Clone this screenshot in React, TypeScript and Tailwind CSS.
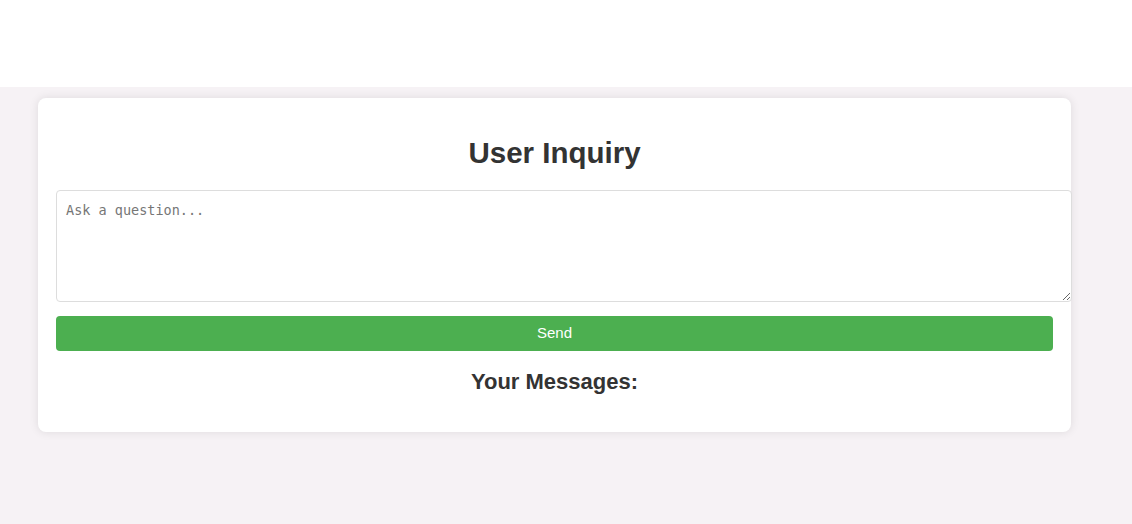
import React, { useState } from 'react';

const App = () => {
    const [question, setQuestion] = useState('');

    return (
        <div className="min-h-screen w-full bg-[#f6f2f5] font-['Liberation_Sans',Arial,sans-serif] text-[#333]">
            <div className="h-[87px] bg-white" />
            <div className="pt-[11px] pl-[38px] pb-[40px]">
                <div className="w-[1033px] rounded-lg bg-white p-[18px] shadow-[0_0_10px_rgba(0,0,0,0.1)]">
                    <h1 className="mt-[20px] mb-[20px] h-[34px] text-center text-[29.5px] font-bold leading-[34px]">User Inquiry</h1>
                    <textarea
                        value={question}
                        onChange={(e) => setQuestion(e.target.value)}
                        placeholder="Ask a question..."
                        className="block h-[112px] w-[1016px] resize-y rounded border border-[#ddd] px-[9px] pt-[11px] pb-[9px] font-['DejaVu_Sans_Mono',monospace] text-[13.5px] leading-[16px] text-[#333] placeholder:text-[#767676] focus:outline-none"
                    />
                    <button className="mt-[14px] block h-[35px] w-full rounded bg-[#4caf50] text-[15px] text-white">
                        Send
                    </button>
                    <h3 className="mt-[18px] mb-[20px] h-[25px] text-center text-[22px] font-bold leading-[25px]">Your Messages:</h3>
                </div>
            </div>
        </div>
    );
};

export default App;
